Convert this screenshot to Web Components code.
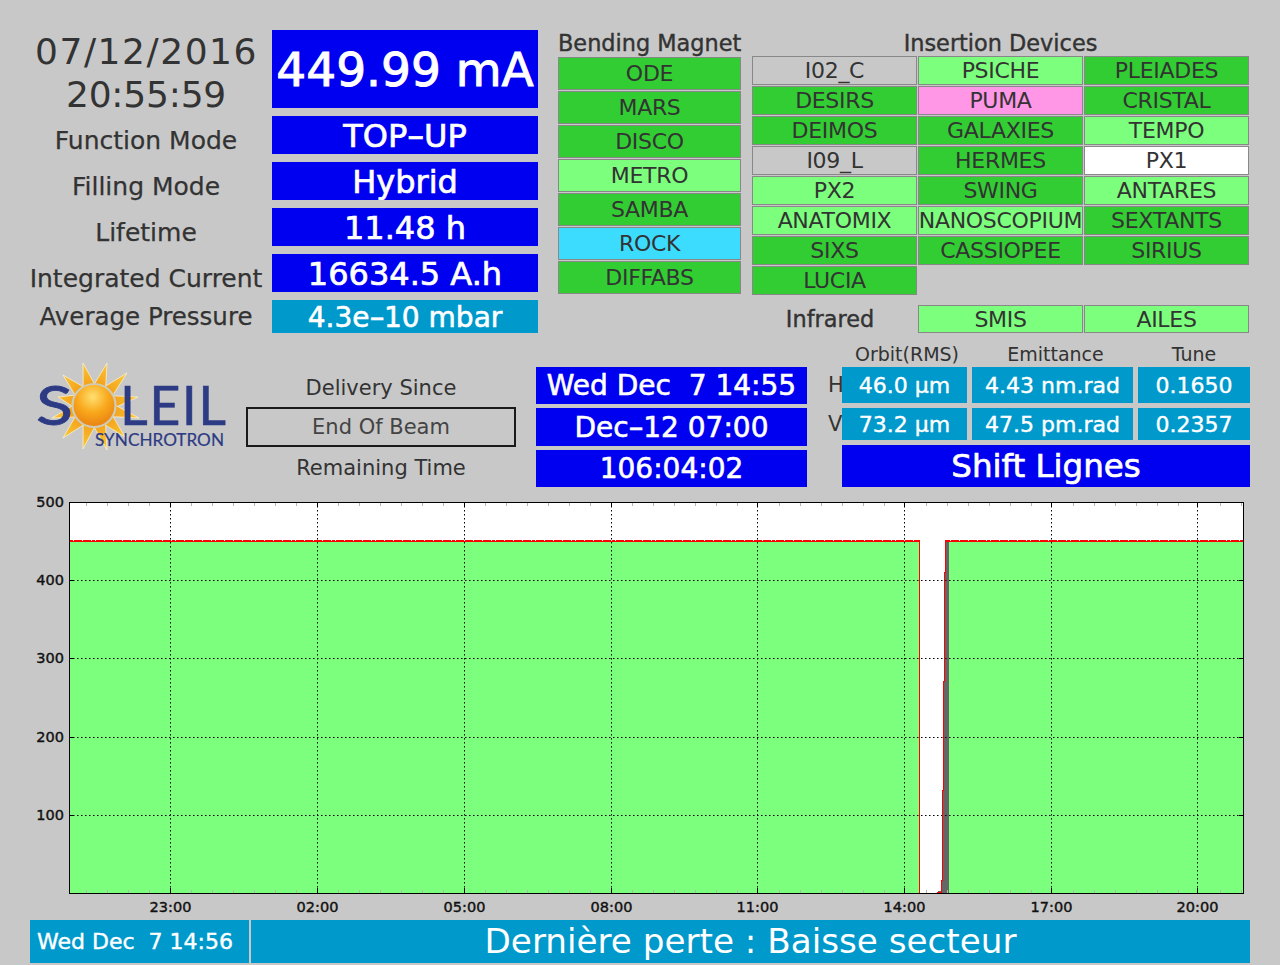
<!DOCTYPE html>
<html><head><meta charset="utf-8"><style>
html,body{margin:0;padding:0;background:#c8c8c8;}
body{width:1280px;height:965px;overflow:hidden;font-family:"DejaVu Sans",sans-serif;color:#333;}
</style></head><body>
<soleil-panel></soleil-panel>
<script>
const F='"DejaVu Sans",sans-serif';
const HY='<span style="display:inline-block;transform:scaleX(1.55);margin:0 .08em">-</span>';
class ValueBox extends HTMLElement{
  constructor(){super();const s=this.attachShadow({mode:'open'});
  s.innerHTML=`<style>:host{display:flex;align-items:center;justify-content:center;background:var(--bg,#0000f0);color:#fff;font-family:${F};font-size:var(--fs,32px);line-height:1;font-weight:400;-webkit-text-stroke:var(--sw,.7px) #fff;white-space:pre;box-sizing:border-box;overflow:hidden;padding-top:var(--pt,0)}</style><slot></slot>`;}
}
customElements.define('value-box',ValueBox);
class StatusCell extends HTMLElement{
  constructor(){super();const s=this.attachShadow({mode:'open'});
  s.innerHTML=`<style>:host{display:flex;align-items:center;justify-content:center;box-sizing:border-box;border:1px solid #888;color:#333;font:22px/1 ${F};white-space:nowrap;overflow:hidden;background:#c8c8c8;letter-spacing:-.3px}
  :host([s=g]){background:#32cd32}:host([s=l]){background:#7cff7c}:host([s=c]){background:#3cdcff}:host([s=p]){background:#ff96e6}:host([s=w]){background:#fff}</style><slot></slot>`;}
}
customElements.define('status-cell',StatusCell);
class MachineStatus extends HTMLElement{
  constructor(){super();const s=this.attachShadow({mode:'open'});
  const rows=[['Function Mode',`TOP${HY}UP`],['Filling Mode','Hybrid'],['Lifetime','11.48 h'],['Integrated Current','16634.5 A.h']];
  s.innerHTML=`<style>:host{display:grid;grid-template-columns:232px 266px;column-gap:10px;row-gap:8px;grid-template-rows:78px 38px 38px 38px 38px 33px;width:508px}
  .d{text-align:center;font:36px/43px ${F};height:78px;white-space:nowrap;color:#333}
  .d1{letter-spacing:1.55px;padding-left:1px}.d2{letter-spacing:-.2px}
  .l{display:flex;align-items:center;justify-content:center;font:25px/1 ${F};white-space:nowrap;color:#333;padding-top:10px;height:38px;box-sizing:border-box;-webkit-text-stroke:.25px #333}
  value-box{--fs:32px;--pt:2px}.big{--fs:47px;--pt:0;--sw:1px}.pr{--bg:#0099cc;--fs:28px;--sw:.6px}
  .l.a{padding-top:2px;height:33px;font-size:24.5px}</style>
  <div class="d"><div class="d1">07/12/2016</div><div class="d2">20:55:59</div></div><value-box class="big">449.99 mA</value-box>
  ${rows.map(r=>`<div class="l">${r[0]}</div><value-box>${r[1]}</value-box>`).join('')}
  <div class="l a">Average Pressure</div><value-box class="pr">4.3e${HY}10 mbar</value-box>`;}
}
customElements.define('machine-status',MachineStatus);
class BendingList extends HTMLElement{
  constructor(){super();const s=this.attachShadow({mode:'open'});
  const b=[['ODE','g'],['MARS','g'],['DISCO','g'],['METRO','l'],['SAMBA','g'],['ROCK','c'],['DIFFABS','g']];
  s.innerHTML=`<style>:host{display:block;width:183px}.t{font:22.4px/27px ${F};-webkit-text-stroke:.4px #333;text-align:center;white-space:nowrap;color:#333}
  .g{display:grid;grid-auto-rows:33px;row-gap:1px}</style><div class="t">Bending Magnet</div><div class="g">${b.map(x=>`<status-cell s="${x[1]}">${x[0]}</status-cell>`).join('')}</div>`;}
}
customElements.define('bending-list',BendingList);
class InsertionList extends HTMLElement{
  constructor(){super();const s=this.attachShadow({mode:'open'});
  const d=[['I02_C',''],['PSICHE','l'],['PLEIADES','g'],['DESIRS','g'],['PUMA','p'],['CRISTAL','g'],['DEIMOS','g'],['GALAXIES','g'],['TEMPO','l'],['I09_L',''],['HERMES','g'],['PX1','w'],['PX2','l'],['SWING','g'],['ANTARES','l'],['ANATOMIX','l'],['NANOSCOPIUM','l'],['SEXTANTS','g'],['SIXS','g'],['CASSIOPEE','g'],['SIRIUS','g'],['LUCIA','g']];
  s.innerHTML=`<style>:host{display:block;width:497px}.t{font:22.4px/26px ${F};-webkit-text-stroke:.4px #333;text-align:center;white-space:nowrap;color:#333}
  .g{display:grid;grid-template-columns:165px 165px 165px;column-gap:1px;grid-auto-rows:29px;row-gap:1px}
  .i{display:grid;grid-template-columns:165px 165px 165px;column-gap:1px;grid-auto-rows:28px;margin-top:10px}
  .il{display:flex;align-items:center;justify-content:center;font:22.4px/1 ${F};-webkit-text-stroke:.4px #333;padding-right:9px;color:#333}
  .i status-cell{padding-top:1px}</style>
  <div class="t">Insertion Devices</div><div class="g">${d.map(x=>`<status-cell s="${x[1]}">${x[0]}</status-cell>`).join('')}</div>
  <div class="i"><div class="il">Infrared</div><status-cell s="l">SMIS</status-cell><status-cell s="l">AILES</status-cell></div>`;}
}
customElements.define('insertion-list',InsertionList);
class SoleilLogo extends HTMLElement{
  constructor(){super();const s=this.attachShadow({mode:'open'});
  const cx=94,cy=405.5;
  const tips=[[83,363],[107,363],[127,373],[138,397],[139,418],[125,437],[107,450],[83,449],[63,438],[52,418],[58,397],[63,375]];
  let rays='';
  tips.forEach(t=>{const a=Math.atan2(t[1]-cy,t[0]-cx),w=.32,b=20;
    const p=(q)=>`${(cx+b*Math.cos(q)).toFixed(1)},${(cy+b*Math.sin(q)).toFixed(1)}`;
    rays+=`<polygon points="${p(a-w)} ${t[0]},${t[1]} ${p(a+w)}" fill="url(#ray)" stroke="#fff6d0" stroke-width=".7"/>`;});
  s.innerHTML=`<style>:host{display:block;width:210px;height:100px}svg{display:block}</style>
  <svg width="210" height="100" viewBox="25 355 210 100"><defs>
  <radialGradient id="sun" cx=".47" cy=".3" r=".72"><stop offset="0" stop-color="#ffe070"/><stop offset=".5" stop-color="#f9a81c"/><stop offset="1" stop-color="#e87f10"/></radialGradient>
  <radialGradient id="ray" gradientUnits="userSpaceOnUse" cx="94" cy="405" r="48"><stop offset=".4" stop-color="#f29f1a"/><stop offset="1" stop-color="#fdce3a"/></radialGradient></defs>
  ${rays}
  <text x="36" y="425" font-family="Lato,'Open Sans',sans-serif" font-size="54" fill="#2d3b84" stroke="#2d3b84" stroke-width=".8" textLength="37" lengthAdjust="spacingAndGlyphs">S</text>
  <circle cx="94" cy="405.5" r="21.5" fill="url(#sun)" stroke="#cfcbb4" stroke-width="2.2"/>
  <text x="120" y="425" font-family="Lato,'Open Sans',sans-serif" font-size="54" fill="#2d3b84" stroke="#2d3b84" stroke-width=".5" textLength="106" lengthAdjust="spacing">LEIL</text>
  <text x="95" y="446" font-family="Lato,'Open Sans',sans-serif" font-size="18" fill="#2d3b84" stroke="#2d3b84" stroke-width=".2" textLength="129" lengthAdjust="spacingAndGlyphs">SYNCHROTRON</text>
  </svg>`;}
}
customElements.define('soleil-logo',SoleilLogo);
class DeliveryInfo extends HTMLElement{
  constructor(){super();const s=this.attachShadow({mode:'open'});
  s.innerHTML=`<style>:host{display:grid;grid-template-columns:270px 271px;column-gap:20px;width:561px}
  .c{display:flex;flex-direction:column}
  .l{display:flex;align-items:center;justify-content:center;height:40px;font:21px/1 ${F};white-space:nowrap;color:#333;padding-top:2px;box-sizing:border-box}
  .box{box-sizing:border-box;height:40px;border:2px solid #1a1a1a;display:flex;align-items:center;justify-content:center;font:21px/1 ${F};color:#444;padding-top:1px}
  .v{display:grid;grid-template-rows:37px 38px 37px;row-gap:4px;--fs:28px;--pt:1px;--sw:.6px}</style>
  <div class="c"><div class="l">Delivery Since</div><div class="box">End Of Beam</div><div class="l">Remaining Time</div></div>
  <div class="v"><value-box>Wed Dec  7 14:55</value-box><value-box>Dec${HY}12 07:00</value-box><value-box>106:04:02</value-box></div>`;}
}
customElements.define('delivery-info',DeliveryInfo);
class BeamParams extends HTMLElement{
  constructor(){super();const s=this.attachShadow({mode:'open'});
  s.innerHTML=`<style>:host{display:block;width:422px}
  .g{display:grid;grid-template-columns:14px 125px 5px 161px 5px 112px;grid-template-rows:22px 36px 5px 32px 5px 42px;width:422px}
  .h{font:19px/1 ${F};text-align:center;color:#333;white-space:nowrap}
  .h1{padding-left:5px}.h2{padding-left:6px}
  .s{font:21px/36px ${F};color:#333;width:14px;white-space:nowrap}
  value-box{--bg:#0099cc;--fs:22px;--pt:1px;--sw:.4px}
  .shift{grid-column:2/7;--bg:#0000f0;--fs:32.5px;--pt:0;--sw:.7px}
  .sp{height:5px;grid-column:1/-1}</style>
  <div class="g">
  <span></span><div class="h h1">Orbit(RMS)</div><span></span><div class="h h2">Emittance</div><span></span><div class="h">Tune</div>
  <div class="s">H</div><value-box>46.0 µm</value-box><span></span><value-box>4.43 nm.rad</value-box><span></span><value-box>0.1650</value-box>
  <div class="sp"></div>
  <div class="s" style="line-height:32px">V</div><value-box>73.2 µm</value-box><span></span><value-box>47.5 pm.rad</value-box><span></span><value-box>0.2357</value-box>
  <div class="sp"></div>
  <span></span><value-box class="shift">Shift Lignes</value-box>
  </div>`;}
}
customElements.define('beam-params',BeamParams);
class CurrentChart extends HTMLElement{
  constructor(){super();const s=this.attachShadow({mode:'open'});
  const L=69,T=502,R=1244,B=893;
  const xs=[170,317,464,611,757,904,1051,1197],lab=['23:00','02:00','05:00','08:00','11:00','14:00','17:00','20:00'];
  const ys=[[580,400],[658,300],[737,200],[815,100]];
  let minor='';for(let x=86;x<R;x+=21){if((x-170)%147)minor+=`M${x+.5} ${T+1}v3M${x+.5} ${B-3}v3`;}
  let grid='';xs.forEach(x=>grid+=`M${x+.5} ${T}V${B}`);ys.forEach(y=>grid+=`M${L} ${y[0]+.5}H${R}`);
  let tick='';xs.forEach(x=>tick+=`M${x+.5} ${T}v5M${x+.5} ${B-5}v5`);ys.forEach(y=>tick+=`M${L} ${y[0]+.5}h5M${R-5} ${y[0]+.5}h5`);
  let edge='';for(let x=71;x<919;x+=8){edge+=`M${x+((x*7)%5)} 540.5h1`;}for(let x=950;x<1243;x+=8){edge+=`M${x+((x*7)%5)} 540.5h1`;}
  s.innerHTML=`<style>:host{display:block;width:1280px;height:430px}svg{display:block}text{font-family:${F};font-size:14.5px;fill:#111;stroke:#111;stroke-width:.4px}</style>
  <svg width="1280" height="430" viewBox="0 490 1280 430">
  <rect x="${L}" y="${T}" width="${R-L}" height="${B-T}" fill="#fff"/>
  <path d="M${L} 541H919V${B}H${L}Z" fill="#7cff7c"/>
  <path d="M949 541H${R}V${B}H949Z" fill="#7cff7c"/>
  <path d="M946 541H949V${B}H938V891H942V880H943V790H944V681H945V572H946Z" fill="#666"/>
  <path d="${minor}" stroke="#b4b4b4" fill="none"/>
  <path d="${grid}" stroke="#000" stroke-dasharray="1.5 2.5" fill="none"/>
  <g shape-rendering="crispEdges" fill="none" stroke="#f00">
  <path d="M${L+1} 541H920" stroke-width="2"/><path d="M945 541H${R-1}" stroke-width="2"/>
  <path d="M919.5 541V${B}"/>
  <path d="M937 892.5H941.5V880H942.5V790H943.5V681H944.5V572H945.5V541"/>
  </g>
  <path d="${edge}" stroke="#fff" fill="none"/>
  <path d="${tick}" stroke="#000" fill="none"/>
  <rect x="${L+.5}" y="${T+.5}" width="${R-L-1}" height="${B-T}" fill="none" stroke="#000"/>
  <text x="64" y="507" text-anchor="end">500</text>
  ${ys.map(y=>`<text x="64" y="${y[0]+5}" text-anchor="end">${y[1]}</text>`).join('')}
  ${xs.map((x,i)=>`<text x="${x+.5}" y="912" text-anchor="middle">${lab[i]}</text>`).join('')}
  </svg>`;}
}
customElements.define('current-chart',CurrentChart);
class FooterBar extends HTMLElement{
  constructor(){super();const s=this.attachShadow({mode:'open'});
  s.innerHTML=`<style>:host{display:grid;grid-template-columns:219px 999px;column-gap:2px;height:43px;--bg:#0099cc;width:1220px}
  .a{--fs:22px;--sw:.4px;padding-left:7px}.b{--fs:34.2px;--sw:0}</style>
  <value-box class="a" style="justify-content:flex-start">Wed Dec  7 14:56</value-box><value-box class="b">Dernière perte : Baisse secteur</value-box>`;}
}
customElements.define('footer-bar',FooterBar);
class SoleilPanel extends HTMLElement{
  constructor(){super();const s=this.attachShadow({mode:'open'});
  s.innerHTML=`<style>:host{display:block;width:1280px;height:965px;box-sizing:border-box;padding-top:30px}
  .top{display:flex;padding-left:30px;height:303px}
  bending-list{margin-left:20px}insertion-list{margin-left:11px}
  .mid{display:flex;height:142px;margin-top:12px;padding-left:36px}
  soleil-logo{margin-top:10px;margin-left:-11px}
  delivery-info{margin-top:22px;margin-left:11px}
  beam-params{margin-left:21px}
  current-chart{margin-top:3px}
  footer-bar{margin-left:30px}
  </style>
  <div class="top"><machine-status></machine-status><bending-list></bending-list><insertion-list></insertion-list></div>
  <div class="mid"><soleil-logo></soleil-logo><delivery-info></delivery-info><beam-params></beam-params></div>
  <current-chart></current-chart><footer-bar></footer-bar>`;}
}
customElements.define('soleil-panel',SoleilPanel);
</script></body></html>
